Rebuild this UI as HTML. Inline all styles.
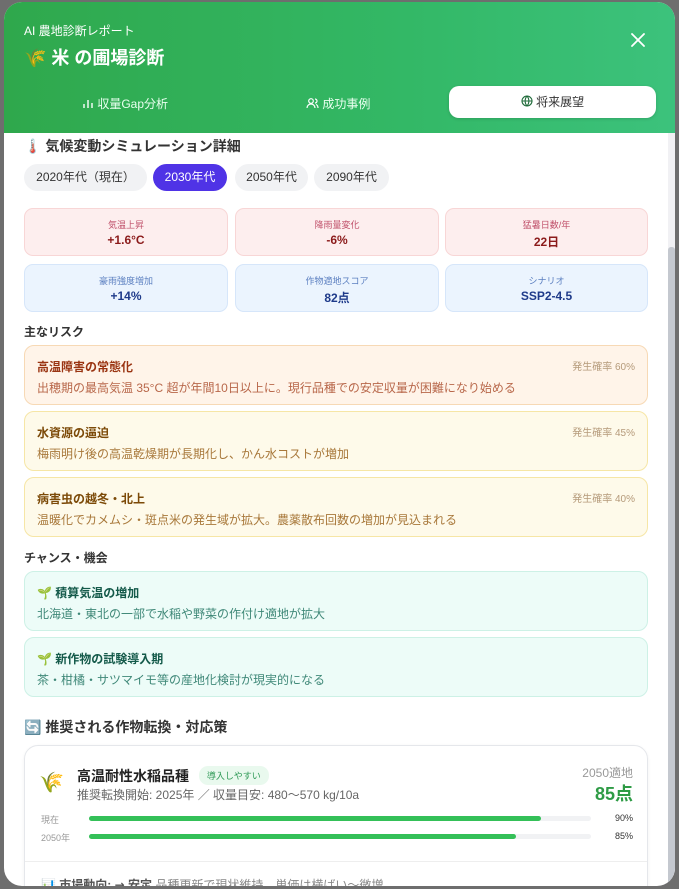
<!DOCTYPE html>
<html><head><meta charset="utf-8"><style>
*{box-sizing:border-box;margin:0;padding:0}
body{width:679px;height:889px;background:#6e6e6e;font-family:"Liberation Sans","Noto Sans CJK JP","DejaVu Sans",sans-serif;overflow:hidden;position:relative}
.modal{position:absolute;left:4px;top:2px;width:671px;height:884px;background:#fff;border-radius:18px;overflow:hidden}
.hdr{position:absolute;left:0;top:0;width:671px;height:131px;background:linear-gradient(90deg,#2fa84c,#33b866 60%,#3cc27c)}
.a{position:absolute}
.sb{position:absolute;left:664px;top:131px;width:7px;height:753px;background:#f1f1f4}
.th{position:absolute;left:664px;top:245px;width:7px;height:639px;background:#c4c8cf;border-radius:3px}
.pill{position:absolute;top:162px;height:27px;border-radius:14px;background:#f1f2f4;font-size:12px;color:#333;line-height:27px;text-align:center}
.st{position:absolute;height:48px;border-radius:9px;text-align:center;font-size:9px}
.st b{display:block;font-size:12px;margin-top:2px}
.r{background:#fdeeee;border:1px solid #f8d6d6;color:#c0506a}.r b{color:#8b1a1a}
.bl{background:#ebf4fe;border:1px solid #d6e6fa;color:#5b7fc0}.bl b{color:#1e3a8a}
.card{position:absolute;left:20px;width:624px;height:60px;border-radius:10px;padding:12px 12px 0 12px;font-size:12px}
.card h4{font-size:12px;font-weight:bold;margin-bottom:4px}
.card .p{position:absolute;right:12px;top:12px;font-size:10px;color:#b59a7a}
.or{background:#fff4e9;border:1px solid #f7d9b5}.or h4{color:#9a3412}.or div{color:#b8674a}
.ye{background:#fefaea;border:1px solid #f6e6a6}.ye h4{color:#7c4a08}.ye div{color:#a8783a}
.gr{background:#edfcf8;border:1px solid #cdf1e6}.gr h4{color:#145a4a}.gr div{color:#3f8878}
.lbl{position:absolute;left:20px;font-size:12px;font-weight:bold;color:#333}
</style></head><body>
<div class="modal">
<div class="hdr">
<div class="a" style="left:20px;top:20px;font-size:12px;color:#fff">AI 農地診断レポート</div>
<div class="a" style="left:20px;top:42px;font-size:18px;font-weight:bold;color:#fff">🌾 米 の圃場診断</div>
<svg class="a" style="left:627px;top:31px" width="14" height="14" viewBox="0 0 14 14"><path d="M1 1L13 13M13 1L1 13" stroke="#fff" stroke-width="1.8" stroke-linecap="round"/></svg>
<div class="a" style="left:78px;top:93px;font-size:12px;color:#eafff0">
<svg width="12" height="12" viewBox="0 0 12 12" style="vertical-align:-1px"><path d="M2 11V7M6 11V3M10 11V6" stroke="#fff" stroke-width="1.4"/></svg> 収量Gap分析</div>
<div class="a" style="left:302px;top:93px;font-size:12px;color:#eafff0">
<svg width="13" height="12" viewBox="0 0 13 12" style="vertical-align:-1px" fill="none" stroke="#fff" stroke-width="1.2"><circle cx="5" cy="4" r="2.3"/><path d="M1 11c0-2.5 2-4 4-4s4 1.5 4 4M9 2a2 2 0 010 4M10 7.5c1.3.5 2 1.8 2 3.5"/></svg> 成功事例</div>
<div class="a" style="left:445px;top:84px;width:207px;height:32px;background:#fff;border-radius:10px;box-shadow:0 1px 3px rgba(0,0,0,.15);text-align:center;line-height:32px;font-size:12px;color:#333">
<svg width="12" height="12" viewBox="0 0 12 12" style="vertical-align:-1px" fill="none" stroke="#1f6b3a" stroke-width="1.1"><circle cx="6" cy="6" r="5"/><path d="M1 6h10M6 1c-2.5 3-2.5 7 0 10M6 1c2.5 3 2.5 7 0 10"/></svg> 将来展望</div>
</div>
<div class="a" style="left:20px;top:134px;font-size:14px;font-weight:bold;color:#333">🌡️ 気候変動シミュレーション詳細</div>
<div class="pill" style="left:20px;width:123px">2020年代（現在）</div>
<div class="pill" style="left:149px;width:74px;background:#4f33e6;color:#fff">2030年代</div>
<div class="pill" style="left:231px;width:73px">2050年代</div>
<div class="pill" style="left:310px;width:75px">2090年代</div>
<div class="st r" style="left:20px;top:206px;width:204px;padding-top:9px">気温上昇<b>+1.6°C</b></div>
<div class="st r" style="left:231px;top:206px;width:204px;padding-top:9px">降雨量変化<b>-6%</b></div>
<div class="st r" style="left:441px;top:206px;width:203px;padding-top:9px">猛暑日数/年<b>22日</b></div>
<div class="st bl" style="left:20px;top:262px;width:204px;padding-top:9px">豪雨強度増加<b>+14%</b></div>
<div class="st bl" style="left:231px;top:262px;width:204px;padding-top:9px">作物適地スコア<b>82点</b></div>
<div class="st bl" style="left:441px;top:262px;width:203px;padding-top:9px">シナリオ<b>SSP2-4.5</b></div>
<div class="lbl" style="top:321px">主なリスク</div>
<div class="card or" style="top:343px"><h4>高温障害の常態化</h4><span class="p">発生確率 60%</span><div>出穂期の最高気温 35°C 超が年間10日以上に。現行品種での安定収量が困難になり始める</div></div>
<div class="card ye" style="top:409px"><h4>水資源の逼迫</h4><span class="p">発生確率 45%</span><div>梅雨明け後の高温乾燥期が長期化し、かん水コストが増加</div></div>
<div class="card ye" style="top:475px"><h4>病害虫の越冬・北上</h4><span class="p">発生確率 40%</span><div>温暖化でカメムシ・斑点米の発生域が拡大。農薬散布回数の増加が見込まれる</div></div>
<div class="lbl" style="top:547px">チャンス・機会</div>
<div class="card gr" style="top:569px"><h4>🌱 積算気温の増加</h4><div>北海道・東北の一部で水稲や野菜の作付け適地が拡大</div></div>
<div class="card gr" style="top:635px"><h4>🌱 新作物の試験導入期</h4><div>茶・柑橘・サツマイモ等の産地化検討が現実的になる</div></div>
<div class="a" style="left:20px;top:715px;font-size:14px;font-weight:bold;color:#333">🔄 推奨される作物転換・対応策</div>
<div class="a" style="left:20px;top:743px;width:624px;height:160px;border:1px solid #e5e7eb;border-radius:14px;box-shadow:0 1px 3px rgba(0,0,0,.06)">
<div class="a" style="left:14px;top:24px;font-size:20px">🌾</div>
<div class="a" style="left:52px;top:20px;font-size:14px;font-weight:bold;color:#222">高温耐性水稲品種 <span style="display:inline-block;font-size:9px;font-weight:normal;color:#2f9a57;background:#e9f9ee;border-radius:9px;padding:3px 8px;margin-left:6px;vertical-align:2px">導入しやすい</span></div>
<div class="a" style="left:52px;top:40px;font-size:12px;color:#666">推奨転換開始: 2025年 ／ 収量目安: 480〜570 kg/10a</div>
<div class="a" style="right:14px;top:18px;font-size:12px;color:#999">2050適地</div>
<div class="a" style="right:14px;top:34px;font-size:18px;font-weight:bold;color:#2e9b45">85点</div>
<div class="a" style="left:16px;top:67px;font-size:9px;color:#999">現在</div>
<div class="a" style="left:64px;top:70px;width:502px;height:5px;background:#f1f2f4;border-radius:3px"><div style="width:452px;height:5px;background:#34c058;border-radius:3px"></div></div>
<div class="a" style="right:14px;top:67px;font-size:9px;color:#333">90%</div>
<div class="a" style="left:16px;top:85px;font-size:9px;color:#999">2050年</div>
<div class="a" style="left:64px;top:88px;width:502px;height:5px;background:#f1f2f4;border-radius:3px"><div style="width:427px;height:5px;background:#34c058;border-radius:3px"></div></div>
<div class="a" style="right:14px;top:85px;font-size:9px;color:#333">85%</div>
<div class="a" style="left:0;top:115px;width:622px;height:1px;background:#eee"></div>
<div class="a" style="left:16px;top:130px;font-size:12px;color:#888">📊 <b style="color:#555">市場動向: <span style="font-family:'DejaVu Sans',sans-serif">→</span> 安定</b> 品種更新で現状維持。単価は横ばい〜微増</div>
</div>
<div class="sb"></div><div class="th"></div>
</div>
</body></html>
